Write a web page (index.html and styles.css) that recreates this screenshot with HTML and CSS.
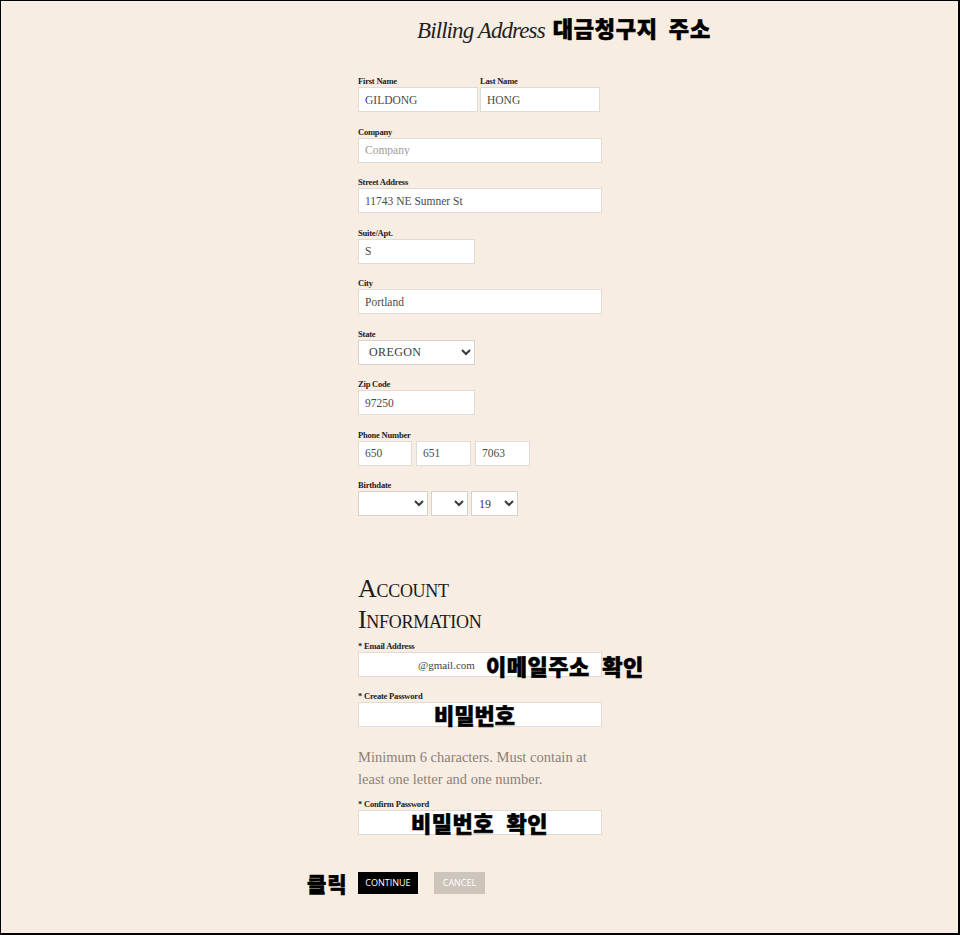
FILE: index.html
```html
<!DOCTYPE html>
<html lang="ko">
<head>
    <meta charset="UTF-8">
    <meta name="viewport" content="width=device-width, initial-scale=1.0">
    <title>Billing Address</title>
    <link rel="stylesheet" href="styles.css">
</head>
<body>

    <div class="frame">

        <!-- Title -->
        <h1 class="page-title">
            <span class="title-en">Billing Address</span>
            <span class="note note-title">대금청구지 주소</span>
        </h1>

        <form class="billing-form">

            <div class="field">
                <div class="row row-name">
                    <div class="col">
                        <label>First Name</label>
                        <input type="text" class="w-half" value="GILDONG">
                    </div>
                    <div class="col">
                        <label>Last Name</label>
                        <input type="text" class="w-half" value="HONG">
                    </div>
                </div>
            </div>

            <div class="field">
                <label>Company</label>
                <input type="text" class="w-full" placeholder="Company">
            </div>

            <div class="field">
                <label>Street Address</label>
                <input type="text" class="w-full" value="11743 NE Sumner St">
            </div>

            <div class="field">
                <label>Suite/Apt.</label>
                <input type="text" class="w-mid" value="S">
            </div>

            <div class="field">
                <label>City</label>
                <input type="text" class="w-full" value="Portland">
            </div>

            <div class="field">
                <label>State</label>
                <select class="w-mid state-select">
                    <option>OREGON</option>
                </select>
            </div>

            <div class="field">
                <label>Zip Code</label>
                <input type="text" class="w-mid" value="97250">
            </div>

            <div class="field">
                <label>Phone Number</label>
                <div class="row row-phone">
                    <input type="text" class="w-phone-a" value="650">
                    <input type="text" class="w-phone" value="651">
                    <input type="text" class="w-phone" value="7063">
                </div>
            </div>

            <div class="field">
                <label>Birthdate</label>
                <div class="row row-birth">
                    <select class="w-month"><option></option></select>
                    <select class="w-day"><option></option></select>
                    <select class="w-year"><option>19</option></select>
                </div>
            </div>

            <!-- Account -->
            <h2 class="section-title">Account<br>Information</h2>

            <div class="field field-email">
                <label>* Email Address</label>
                <input type="text" class="w-full email-input" value="@gmail.com">
                <span class="note note-email">이메일주소 확인</span>
            </div>

            <div class="field field-pass">
                <label>* Create Password</label>
                <input type="password" class="w-full">
                <span class="note note-pass">비밀번호</span>
            </div>

            <p class="help-text">Minimum 6 characters. Must contain at least one letter and one number.</p>

            <div class="field field-confirm">
                <label>* Confirm Password</label>
                <input type="password" class="w-full">
                <span class="note note-confirm">비밀번호 확인</span>
            </div>

            <div class="actions">
                <span class="note note-click">클릭</span>
                <button type="button" class="btn btn-continue">Continue</button>
                <button type="button" class="btn btn-cancel">Cancel</button>
            </div>

        </form>
    </div>

</body>
</html>
```

FILE: styles.css
```css
body {
    margin: 0;
    background: #f8ede2;
    font-family: 'Liberation Serif', serif;
    color: #1a1a1a;
}

.frame {
    width: 960px;
    height: 935px;
    box-sizing: border-box;
    border: 1px solid #000;
    border-right-width: 2px;
    border-bottom-width: 2px;
    background: #f8ede2;
    overflow: hidden;
}

/* Title */
.page-title {
    margin: 0;
    padding: 8px 0 0 416px;
    height: 36px;
    line-height: 36px;
    font-weight: normal;
    white-space: nowrap;
}

.title-en {
    font-style: italic;
    font-size: 23px;
    letter-spacing: -0.9px;
    color: #222;
}

.note {
    font-family: 'Noto Sans CJK KR', sans-serif;
    font-weight: 900;
    color: #000;
    white-space: nowrap;
    -webkit-text-stroke: 0.6px #000;
}

.note-title {
    font-size: 22px;
    letter-spacing: 0.8px;
    word-spacing: 4px;
    margin-left: 0;
    vertical-align: 1px;
}

/* Form */
.billing-form {
    margin: 30px 0 0 357px;
    width: 244px;
}

.field {
    position: relative;
    margin-bottom: 13.5px;
}

.field label {
    display: block;
    font-size: 8.5px;
    line-height: 12px;
    height: 12px;
    font-weight: bold;
    color: #222;
    letter-spacing: -0.2px;
}

.row {
    display: flex;
}

.row-name { gap: 2px; }
.row-phone { gap: 4px; }
.row-birth { gap: 3px; }

.field input,
.field select {
    display: block;
    box-sizing: border-box;
    height: 25px;
    margin: 0;
    padding: 0 6px;
    border: 1px solid #e2dbd3;
    background: #fff;
    font-family: 'Liberation Serif', serif;
    font-size: 11.5px;
    color: #4a4a4a;
    border-radius: 0;
}

.field input::placeholder {
    color: #9d9d9d;
}

.field select {
    padding: 0 3px;
    color: #3a3a3a;
    font-size: 12px;
    border-color: #d9d2ca;
}

.state-select {
    padding-left: 6px !important;
    letter-spacing: 0.4px;
}

.w-full { width: 244px; }
.w-half { width: 120px; }
.w-mid { width: 117px; }
.w-phone-a { width: 54px; }
.w-phone { width: 55px; }
.w-month { width: 70px; }
.w-day { width: 37px; }
.w-year { width: 47px; }

/* Account */
.section-title {
    margin: 57px 0 5px;
    font-size: 26px;
    line-height: 31px;
    font-weight: normal;
    font-variant: small-caps;
    letter-spacing: -0.3px;
    color: #1a1a1a;
}

.email-input {
    padding-left: 59px !important;
    font-size: 11px !important;
    color: #444 !important;
}

.note-email,
.note-pass,
.note-confirm {
    position: absolute;
    top: 12px;
    height: 25px;
    line-height: 25px;
    font-size: 22px;
    word-spacing: 6px;
}

.note-email { left: 128px; top: 13px; letter-spacing: 0.5px; }
.note-pass { left: 76px; }
.note-confirm { left: 53px; letter-spacing: 0.5px; }

.field-email { margin-bottom: 13px; }

.help-text {
    margin: 18.5px 0 8px;
    font-size: 14.5px;
    line-height: 22px;
    color: #8a817a;
    width: 244px;
}

.field-confirm { margin-bottom: 37px; }

/* Buttons */
.actions {
    position: relative;
    display: flex;
    gap: 16px;
}

.note-click {
    position: absolute;
    left: -51px;
    top: -3px;
    font-size: 21px;
    line-height: 28px;
    letter-spacing: 1px;
}

.btn {
    height: 22px;
    border: none;
    padding: 0;
    font-family: 'Open Sans', sans-serif;
    font-size: 9px;
    text-transform: uppercase;
    color: #fff;
    cursor: pointer;
}

.btn-continue {
    width: 60px;
    background: #000;
}

.btn-cancel {
    width: 51px;
    background: #cdc4bc;
}
```
